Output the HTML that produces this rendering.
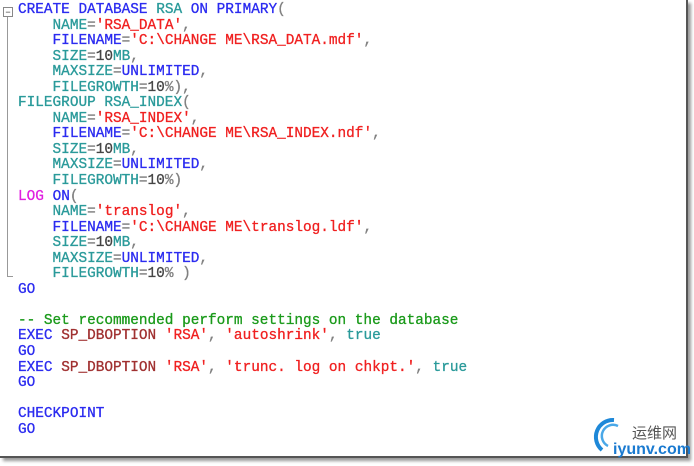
<!DOCTYPE html><html><head><style>
body{margin:0;width:694px;height:466px;background:#fff;position:relative;overflow:hidden}
.fr{position:absolute;left:0;top:0;width:686px;height:456px;border-right:2px solid #555;border-bottom:2px solid #555;box-shadow:3px 3px 3px #999}
pre{position:absolute;left:18px;top:3px;margin:0;font:14.4px/15.55px "Liberation Mono",monospace;color:#808080;-webkit-text-stroke:0.3px}
.b{color:#2b2bf0}.t{color:#2a9a9a}.r{color:#f02020}.m{color:#e020e0}.g{color:#1a9a1a}.d{color:#a03030}.k{color:#444}
.box{position:absolute;left:3px;top:7px;width:8px;height:8px;border:1px solid #888;font:9px/8px sans-serif;color:#333;text-align:center}
.vl{position:absolute;left:7px;top:17px;width:1px;height:259px;background:#999}
.hl{position:absolute;left:7px;top:276px;width:6px;height:1px;background:#999}
</style></head><body>
<div class="fr"></div>
<div class="box">−</div><div class="vl"></div><div class="hl"></div>
<pre><span class="b">CREATE DATABASE</span> <span class="t">RSA</span> <span class="b">ON PRIMARY</span>(
    <span class="t">NAME</span>=<span class="r">'RSA_DATA'</span>,
    <span class="b">FILENAME</span>=<span class="r">'C:\CHANGE ME\RSA_DATA.mdf'</span>,
    <span class="t">SIZE</span>=<span class="k">10</span><span class="t">MB</span>,
    <span class="t">MAXSIZE</span>=<span class="b">UNLIMITED</span>,
    <span class="t">FILEGROWTH</span>=<span class="k">10</span>%),
<span class="t">FILEGROUP RSA_INDEX</span>(
    <span class="t">NAME</span>=<span class="r">'RSA_INDEX'</span>,
    <span class="b">FILENAME</span>=<span class="r">'C:\CHANGE ME\RSA_INDEX.ndf'</span>,
    <span class="t">SIZE</span>=<span class="k">10</span><span class="t">MB</span>,
    <span class="t">MAXSIZE</span>=<span class="b">UNLIMITED</span>,
    <span class="t">FILEGROWTH</span>=<span class="k">10</span>%)
<span class="m">LOG</span> <span class="b">ON</span>(
    <span class="t">NAME</span>=<span class="r">'translog'</span>,
    <span class="b">FILENAME</span>=<span class="r">'C:\CHANGE ME\translog.ldf'</span>,
    <span class="t">SIZE</span>=<span class="k">10</span><span class="t">MB</span>,
    <span class="t">MAXSIZE</span>=<span class="b">UNLIMITED</span>,
    <span class="t">FILEGROWTH</span>=<span class="k">10</span>% )
<span class="b">GO</span>

<span class="g">-- Set recommended perform settings on the database</span>
<span class="b">EXEC</span> <span class="d">SP_DBOPTION</span> <span class="r">'RSA'</span>, <span class="r">'autoshrink'</span>, <span class="t">true</span>
<span class="b">GO</span>
<span class="b">EXEC</span> <span class="d">SP_DBOPTION</span> <span class="r">'RSA'</span>, <span class="r">'trunc. log on chkpt.'</span>, <span class="t">true</span>
<span class="b">GO</span>

<span class="b">CHECKPOINT</span>
<span class="b">GO</span></pre>
<svg style="position:absolute;left:592px;top:416px" width="40" height="40"><path d="M22 4 A17 17 0 0 0 10 34" stroke="#1e88d8" stroke-width="4" fill="none"/><path d="M26 10 A11 11 0 0 0 16 30" stroke="#4aa8e8" stroke-width="2.5" fill="none"/></svg>
<div style="position:absolute;left:632px;top:424px;font:15px/18px 'Noto Sans CJK SC',sans-serif;color:#555">运维网</div>
<div style="position:absolute;left:613px;top:441px;font:bold 16px/18px 'Liberation Sans',sans-serif;color:#1a7ad0">iyunv.com</div>
</body></html>
